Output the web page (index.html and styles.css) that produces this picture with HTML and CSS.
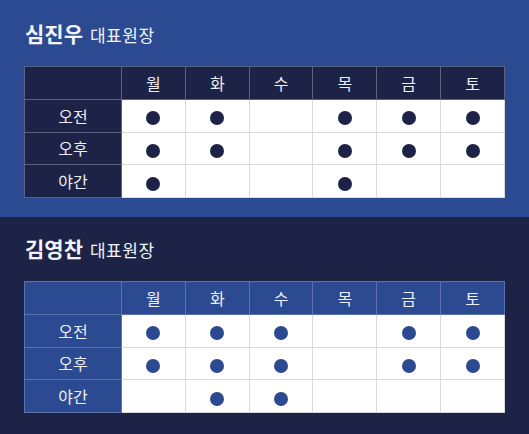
FILE: index.html
```html
<!DOCTYPE html>
<html lang="ko">
<head>
<meta charset="utf-8">
<link rel="stylesheet" href="styles.css">
</head>
<body>
<section class="doctor doctor--blue">
  <h2 class="doctor__title"><span class="doctor__name">심진우</span> <span class="doctor__role">대표원장</span></h2>
  <table class="sched">
    <thead>
      <tr><th class="sched__corner"></th><th>월</th><th>화</th><th>수</th><th>목</th><th>금</th><th>토</th></tr>
    </thead>
    <tbody>
      <tr><th>오전</th><td><i class="dot"></i></td><td><i class="dot"></i></td><td></td><td><i class="dot"></i></td><td><i class="dot"></i></td><td><i class="dot"></i></td></tr>
      <tr><th>오후</th><td><i class="dot"></i></td><td><i class="dot"></i></td><td></td><td><i class="dot"></i></td><td><i class="dot"></i></td><td><i class="dot"></i></td></tr>
      <tr><th>야간</th><td><i class="dot"></i></td><td></td><td></td><td><i class="dot"></i></td><td></td><td></td></tr>
    </tbody>
  </table>
</section>
<section class="doctor doctor--navy">
  <h2 class="doctor__title"><span class="doctor__name">김영찬</span> <span class="doctor__role">대표원장</span></h2>
  <table class="sched">
    <thead>
      <tr><th class="sched__corner"></th><th>월</th><th>화</th><th>수</th><th>목</th><th>금</th><th>토</th></tr>
    </thead>
    <tbody>
      <tr><th>오전</th><td><i class="dot"></i></td><td><i class="dot"></i></td><td><i class="dot"></i></td><td></td><td><i class="dot"></i></td><td><i class="dot"></i></td></tr>
      <tr><th>오후</th><td><i class="dot"></i></td><td><i class="dot"></i></td><td><i class="dot"></i></td><td></td><td><i class="dot"></i></td><td><i class="dot"></i></td></tr>
      <tr><th>야간</th><td></td><td><i class="dot"></i></td><td><i class="dot"></i></td><td></td><td></td><td></td></tr>
    </tbody>
  </table>
</section>
</body>
</html>
```
FILE: styles.css
```css
* { box-sizing: border-box; }
html, body { margin: 0; padding: 0; }
body {
  font-family: "Noto Sans CJK KR", "Noto Sans", sans-serif;
  background: #1c2346;
  color: #fff;
}
.doctor {
  padding: 19px 24px 19px 24px;
}
.doctor--blue { background: #2b4a91; }
.doctor--navy { background: #1c2346; padding-top: 17px; }
.doctor__title {
  margin: 0 0 19px 0;
  height: 28px;
  line-height: 28px;
  font-weight: 400;
  display: flex;
  align-items: baseline;
  gap: 7px;
  padding-left: 1px;
  color: #f2f4fa;
}
.doctor__name { font-size: 21px; font-weight: 700; }
.doctor__role { font-size: 17px; font-weight: 400; letter-spacing: 0.5px; }

.sched {
  border-collapse: collapse;
  table-layout: fixed;
  width: 481px;
  background: #fff;
}
.sched tr { height: 32.75px; }
.sched th, .sched td {
  padding: 0;
  text-align: center;
  vertical-align: middle;
  font-size: 16px;
  font-weight: 400;
  line-height: 20px;
}
.sched th { color: #eef0f6; }
.sched__corner { width: 97px; }
.sched td { border: 1px solid #dadada; }

.doctor--blue .sched th { background: #1c2346; border: 1px solid #5b6180; }
.doctor--navy .sched th { background: #2b4a91; border: 1px solid #5a73aa; }

.dot {
  display: inline-block;
  width: 14px;
  height: 14px;
  border-radius: 50%;
  vertical-align: middle;
}
.doctor--blue .dot { background: #1c2346; }
.doctor--navy .dot { background: #2b4a91; }
```
